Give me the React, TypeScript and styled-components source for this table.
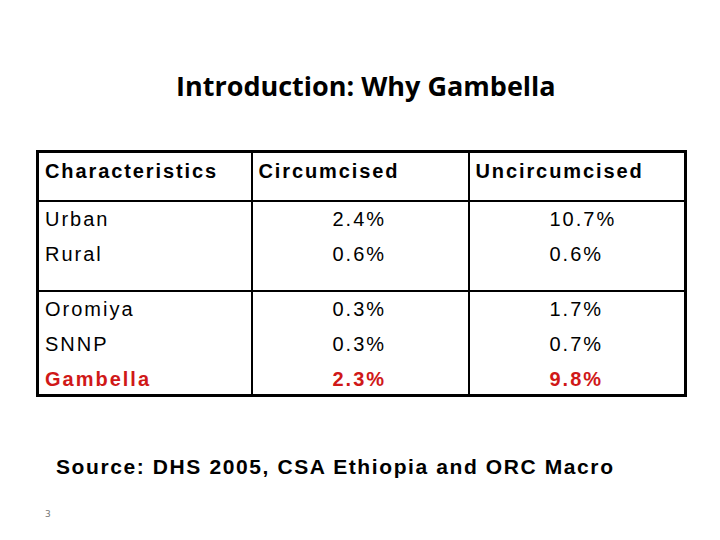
import styled, { createGlobalStyle } from 'styled-components';

const GlobalStyle = createGlobalStyle`
  html, body {
    margin: 0;
    padding: 0;
    background: #ffffff;
  }
`;

type Line = { text: string; highlight?: boolean };
type Row = { label: Line[]; circumcised: Line[]; uncircumcised: Line[]; height: number };

const rows: Row[] = [
  {
    label: [{ text: 'Urban' }, { text: 'Rural' }],
    circumcised: [{ text: '2.4%' }, { text: '0.6%' }],
    uncircumcised: [{ text: '10.7%' }, { text: '0.6%' }],
    height: 90,
  },
  {
    label: [{ text: 'Oromiya' }, { text: 'SNNP' }, { text: 'Gambella', highlight: true }],
    circumcised: [{ text: '0.3%' }, { text: '0.3%' }, { text: '2.3%', highlight: true }],
    uncircumcised: [{ text: '1.7%' }, { text: '0.7%' }, { text: '9.8%', highlight: true }],
    height: 100,
  },
];

const App = () => {
  return (
    <>
      <GlobalStyle />
      <Slide>
        <Title>Introduction: Why Gambella</Title>
        <Table>
          <colgroup>
            <col style={{ width: 214 }} />
            <col style={{ width: 217 }} />
            <col style={{ width: 217 }} />
          </colgroup>
          <thead>
            <tr>
              <HeadCell>Characteristics</HeadCell>
              <HeadCell>Circumcised</HeadCell>
              <HeadCell>Uncircumcised</HeadCell>
            </tr>
          </thead>
          <tbody>
            {rows.map((row, i) => (
              <tr key={i} style={{ height: row.height }}>
                <Cell>
                  {row.label.map((l) => (
                    <CellLine key={l.text} $highlight={l.highlight}>
                      {l.text}
                    </CellLine>
                  ))}
                </Cell>
                <Cell $indent>
                  {row.circumcised.map((l, j) => (
                    <CellLine key={j} $highlight={l.highlight}>
                      {l.text}
                    </CellLine>
                  ))}
                </Cell>
                <Cell $indent>
                  {row.uncircumcised.map((l, j) => (
                    <CellLine key={j} $highlight={l.highlight}>
                      {l.text}
                    </CellLine>
                  ))}
                </Cell>
              </tr>
            ))}
          </tbody>
        </Table>
        <Source>Source: DHS 2005, CSA Ethiopia and ORC Macro</Source>
        <PageNumber>3</PageNumber>
      </Slide>
    </>
  );
};

export default App;

const Slide = styled.div`
  width: 720px;
  height: 540px;
  box-sizing: border-box;
  padding: 69px 0 0 36px;
  display: flex;
  flex-direction: column;
  align-items: flex-start;
  overflow: hidden;
  font-family: 'Liberation Sans', Arial, sans-serif;
  color: #000;
`;

const Title = styled.h1`
  margin: 0 0 0 140px;
  font-family: 'Open Sans', 'Liberation Sans', sans-serif;
  font-weight: 700;
  font-size: 27px;
  line-height: 34px;
  color: #000;
`;

const Table = styled.table`
  margin-top: 47px;
  border-collapse: collapse;
  border: 3px solid #000;
  table-layout: fixed;
  width: 648px;
`;

const HeadCell = styled.th`
  height: 46px;
  padding: 1px 0 0 6px;
  border: 2px solid #000;
  text-align: left;
  vertical-align: top;
  font-size: 20px;
  font-weight: 700;
  letter-spacing: 1.9px;
  line-height: 35px;
`;

const Cell = styled.td<{ $indent?: boolean }>`
  padding: 0 0 0 ${({ $indent }) => ($indent ? '80px' : '6px')};
  border: 2px solid #000;
  vertical-align: top;
`;

const CellLine = styled.div<{ $highlight?: boolean }>`
  height: 35px;
  font-size: 20px;
  line-height: 35px;
  letter-spacing: 2px;
  font-weight: ${({ $highlight }) => ($highlight ? 700 : 400)};
  color: ${({ $highlight }) => ($highlight ? '#d01818' : '#000')};
  white-space: nowrap;

  &:nth-child(3) {
    height: 32px;
  }
`;

const Source = styled.div`
  margin: 56px 0 0 20px;
  font-size: 21px;
  font-weight: 700;
  letter-spacing: 1.6px;
  line-height: 28px;
`;

const PageNumber = styled.div`
  margin: 27px 0 0 9px;
  font-family: 'DejaVu Sans', sans-serif;
  font-size: 9px;
  line-height: 12px;
  color: #777777;
`;
